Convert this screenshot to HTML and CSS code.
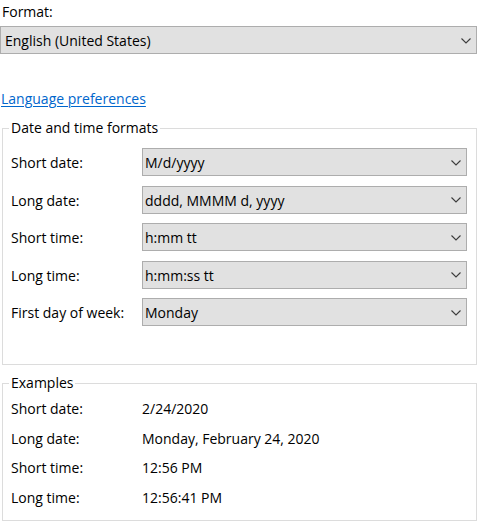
FILE: index.html
```html
<!DOCTYPE html>
<html lang="en">
<head>
<meta charset="utf-8">
<title>Region</title>
<link rel="stylesheet" href="styles.css">
</head>
<body>
<div class="page">
  <div class="field-label">Format:</div>
  <div class="combo combo-wide">
    <span class="combo-text">English (United States)</span>
    <svg class="chev" width="10" height="6" viewBox="0 0 10 6"><polyline points="0.5,0.5 5,5 9.5,0.5" /></svg>
  </div>

  <a class="link" href="#">Language preferences</a>

  <fieldset class="group formats">
    <legend>Date and time formats</legend>
    <div class="form-grid">
      <div class="row-label">Short date:</div>
      <div class="combo"><span class="combo-text">M/d/yyyy</span><svg class="chev" width="10" height="6" viewBox="0 0 10 6"><polyline points="0.5,0.5 5,5 9.5,0.5" /></svg></div>
      <div class="row-label">Long date:</div>
      <div class="combo"><span class="combo-text">dddd, MMMM d, yyyy</span><svg class="chev" width="10" height="6" viewBox="0 0 10 6"><polyline points="0.5,0.5 5,5 9.5,0.5" /></svg></div>
      <div class="row-label">Short time:</div>
      <div class="combo"><span class="combo-text">h:mm tt</span><svg class="chev" width="10" height="6" viewBox="0 0 10 6"><polyline points="0.5,0.5 5,5 9.5,0.5" /></svg></div>
      <div class="row-label">Long time:</div>
      <div class="combo"><span class="combo-text">h:mm:ss tt</span><svg class="chev" width="10" height="6" viewBox="0 0 10 6"><polyline points="0.5,0.5 5,5 9.5,0.5" /></svg></div>
      <div class="row-label">First day of week:</div>
      <div class="combo"><span class="combo-text">Monday</span><svg class="chev" width="10" height="6" viewBox="0 0 10 6"><polyline points="0.5,0.5 5,5 9.5,0.5" /></svg></div>
    </div>
  </fieldset>

  <fieldset class="group examples">
    <legend>Examples</legend>
    <div class="example-grid">
      <div>Short date:</div><div>2/24/2020</div>
      <div>Long date:</div><div>Monday, February 24, 2020</div>
      <div>Short time:</div><div>12:56 PM</div>
      <div>Long time:</div><div>12:56:41 PM</div>
    </div>
  </fieldset>
</div>
</body>
</html>
```

FILE: styles.css
```css
html, body {
  margin: 0;
  padding: 0;
  background: #ffffff;
}

body {
  font-family: "Open Sans", "Liberation Sans", sans-serif;
  font-size: 14px;
  color: #000000;
  line-height: 20px;
}

.page {
  width: 479px;
  height: 523px;
  display: flex;
  flex-direction: column;
  align-items: flex-start;
}

.field-label {
  margin-top: 2px;
  padding-left: 2px;
  height: 20px;
}

.combo {
  box-sizing: border-box;
  height: 28px;
  border: 1px solid #adadad;
  background: #e1e1e1;
  display: flex;
  align-items: center;
  justify-content: space-between;
  padding: 0 5px 0 2px;
}

.combo-text {
  line-height: 24px;
  padding-top: 2px;
  white-space: nowrap;
}

.combo-wide {
  margin-top: 4px;
  width: 477px;
  padding-left: 4px;
}

.chev {
  display: block;
  flex: none;
  margin-top: 1px;
}

.chev polyline {
  fill: none;
  stroke: #3c3c3c;
  stroke-width: 1.1;
}

.link {
  margin-top: 35px;
  margin-left: 1px;
  color: #0066cc;
  text-decoration: underline;
  text-underline-offset: 2px;
  height: 20px;
}

.group {
  box-sizing: border-box;
  margin: 0 0 0 2px;
  width: 475px;
  border: 1px solid #dcdcdc;
  padding: 0 9px 0 8px;
  min-width: 0;
}

.group legend {
  margin-left: -2px;
  padding: 0 2px;
  line-height: 20px;
}

.formats {
  margin-top: 9px;
  padding-top: 10px;
  padding-bottom: 38px;
}

.form-grid {
  display: grid;
  grid-template-columns: 131px 1fr;
  row-gap: 9.5px;
  align-items: center;
}

.row-label {
  padding-top: 2px;
  white-space: nowrap;
}

.examples {
  margin-top: 8px;
  padding-top: 1px;
  padding-bottom: 8px;
}

.example-grid {
  display: grid;
  grid-template-columns: 131px 1fr;
  grid-auto-rows: 29.6px;
  line-height: 29.6px;
  white-space: nowrap;
}
```
